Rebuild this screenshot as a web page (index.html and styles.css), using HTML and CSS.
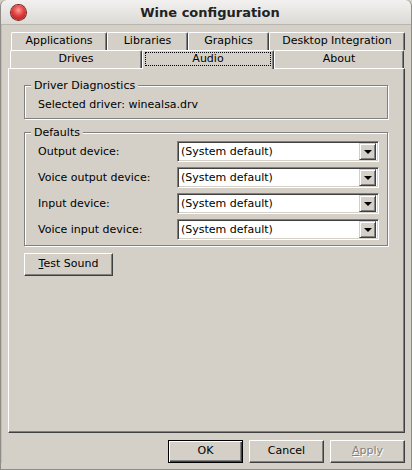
FILE: index.html
```html
<!DOCTYPE html>
<html>
<head>
<meta charset="utf-8">
<link rel="stylesheet" href="styles.css">
</head>
<body>
<div class="window">
  <div class="titlebar">
    <span class="close"></span>
    <span class="title">Wine configuration</span>
  </div>
  <div class="client">
    <div class="tabs">
      <div class="tabrow row1">
        <div class="tab w-apps">Applications</div>
        <div class="tab w-libs">Libraries</div>
        <div class="tab w-gfx">Graphics</div>
        <div class="tab w-desk">Desktop Integration</div>
      </div>
      <div class="tabrow row2">
        <div class="tab w-drives">Drives</div>
        <div class="tab w-audio selected"><span class="focus">Audio</span></div>
        <div class="tab w-about">About</div>
      </div>
    </div>
    <div class="panel">
      <div class="group diag">
        <span class="legend">Driver Diagnostics</span>
        <div class="diagtext">Selected driver: winealsa.drv</div>
      </div>
      <div class="group defaults">
        <span class="legend">Defaults</span>
        <div class="row"><span class="lbl">Output device:</span><div class="combo"><span class="val">(System default)</span><span class="drop"><span class="tri"></span></span></div></div>
        <div class="row"><span class="lbl">Voice output device:</span><div class="combo"><span class="val">(System default)</span><span class="drop"><span class="tri"></span></span></div></div>
        <div class="row"><span class="lbl">Input device:</span><div class="combo"><span class="val">(System default)</span><span class="drop"><span class="tri"></span></span></div></div>
        <div class="row"><span class="lbl">Voice input device:</span><div class="combo"><span class="val">(System default)</span><span class="drop"><span class="tri"></span></span></div></div>
      </div>
      <div class="btn test"><u>T</u>est Sound</div>
    </div>
    <div class="buttons">
      <div class="btn default">OK</div>
      <div class="btn">Cancel</div>
      <div class="btn disabled"><u>A</u>pply</div>
    </div>
  </div>
</div>
</body>
</html>
```
FILE: styles.css
```css
html, body {
  margin: 0;
  padding: 0;
  background: #d4d0c8;
}
.window {
  width: 412px;
  height: 470px;
  box-sizing: border-box;
  border: 1px solid #8e8c87;
  border-top: none;
  border-radius: 6px 6px 0 0;
  background: #d4d0c8;
  font-family: "DejaVu Sans", sans-serif;
  font-size: 11px;
  color: #000;
  overflow: hidden;
}
.titlebar {
  height: 24px;
  background: linear-gradient(#f2f1ef, #dcdad5);
  border-bottom: 1px solid #b9b6b0;
  border-radius: 6px 6px 0 0;
  display: flex;
  align-items: center;
  position: relative;
}
.close {
  position: absolute;
  left: 10px;
  top: 5px;
  width: 15px;
  height: 15px;
  border-radius: 50%;
  background: radial-gradient(circle at 50% 35%, #ff9a9a 0, #e0403e 45%, #a50e0e 100%);
  box-shadow: 0 0 0 1px #7a2020;
}
.title {
  flex: 1;
  text-align: center;
  font-family: "DejaVu Sans", sans-serif;
  font-weight: bold;
  font-size: 13px;
  color: #222;
  padding-left: 8px;
}
.client {
  padding: 7px 3px 0 6px;
  border-left: 1px solid #c2beb6;
}
.tabs {
  display: flex;
  flex-direction: column;
}
.tabrow {
  display: flex;
  height: 18px;
}
.row1 { margin-left: 3px; }
.row2 { margin-left: 2px; }
.tab {
  box-sizing: border-box;
  height: 18px;
  border-top: 1px solid #fff;
  border-left: 1px solid #fff;
  border-right: 1px solid #404040;
  box-shadow: inset -1px 0 0 #808080;
  border-radius: 2px 2px 0 0;
  text-align: center;
  line-height: 16px;
  background: #d4d0c8;
}
.w-apps { width: 96px; }
.w-libs { width: 81px; }
.w-gfx { width: 81px; }
.w-desk { width: 136px; }
.w-drives { width: 132px; }
.w-audio { width: 132px; }
.w-about { width: 130px; }
.tab.selected {
  position: relative;
  z-index: 2;
  height: 19px;
  margin-bottom: -1px;
}
.focus {
  display: block;
  margin: 1px 2px 2px 2px;
  border: 1px dotted #000;
  line-height: 12px;
  height: 12px;
}
.panel {
  box-sizing: border-box;
  width: 397px;
  height: 365px;
  border-top: 1px solid #fff;
  border-left: 1px solid #fff;
  border-right: 1px solid #404040;
  border-bottom: 1px solid #404040;
  box-shadow: inset -1px -1px 0 #808080;
  padding: 16px 0 0 15px;
  position: relative;
}
.group {
  position: relative;
  box-sizing: border-box;
  width: 364px;
  border: 1px solid #808080;
  box-shadow: inset 1px 1px 0 #fff, 1px 1px 0 #fff;
}
.legend {
  position: absolute;
  top: -7px;
  left: 6px;
  padding: 0 3px;
  background: #d4d0c8;
  line-height: 13px;
}
.diag {
  height: 34px;
  padding: 12px 0 0 13px;
}
.defaults {
  margin-top: 13px;
  height: 114px;
  padding: 8px 0 0 13px;
  display: flex;
  flex-direction: column;
  gap: 5px;
}
.row {
  display: flex;
  align-items: center;
  height: 21px;
}
.lbl {
  width: 139px;
}
.combo {
  box-sizing: border-box;
  width: 202px;
  height: 21px;
  background: #fff;
  border-top: 1px solid #808080;
  border-left: 1px solid #808080;
  border-right: 1px solid #fff;
  border-bottom: 1px solid #fff;
  box-shadow: inset 1px 1px 0 #404040, inset -1px -1px 0 #d4d0c8;
  display: flex;
  align-items: center;
  padding: 2px;
}
.val {
  flex: 1;
  padding-left: 1px;
}
.drop {
  box-sizing: border-box;
  width: 17px;
  height: 17px;
  background: #d4d0c8;
  border-top: 1px solid #d4d0c8;
  border-left: 1px solid #d4d0c8;
  border-right: 1px solid #404040;
  border-bottom: 1px solid #404040;
  box-shadow: inset 1px 1px 0 #fff, inset -1px -1px 0 #808080;
  display: flex;
  align-items: center;
  justify-content: center;
}
.tri {
  width: 0;
  height: 0;
  border-left: 4px solid transparent;
  border-right: 4px solid transparent;
  border-top: 4px solid #000;
  margin-top: 1px;
}
.btn {
  box-sizing: border-box;
  width: 75px;
  height: 23px;
  border-top: 1px solid #fff;
  border-left: 1px solid #fff;
  border-right: 1px solid #404040;
  border-bottom: 1px solid #404040;
  box-shadow: inset -1px -1px 0 #808080;
  text-align: center;
  line-height: 20px;
  background: #d4d0c8;
}
.btn u { text-decoration: underline; }
.test {
  width: 89px;
  margin-top: 7px;
}
.buttons {
  display: flex;
  justify-content: flex-end;
  gap: 6px;
  padding: 7px 3px 0 0;
}
.btn.default {
  border: 1px solid #000;
  box-shadow: inset 1px 1px 0 #fff, inset -1px -1px 0 #404040, inset -2px -2px 0 #808080;
}
.btn.disabled {
  color: #808080;
  text-shadow: 1px 1px 0 #fff;
}
```
